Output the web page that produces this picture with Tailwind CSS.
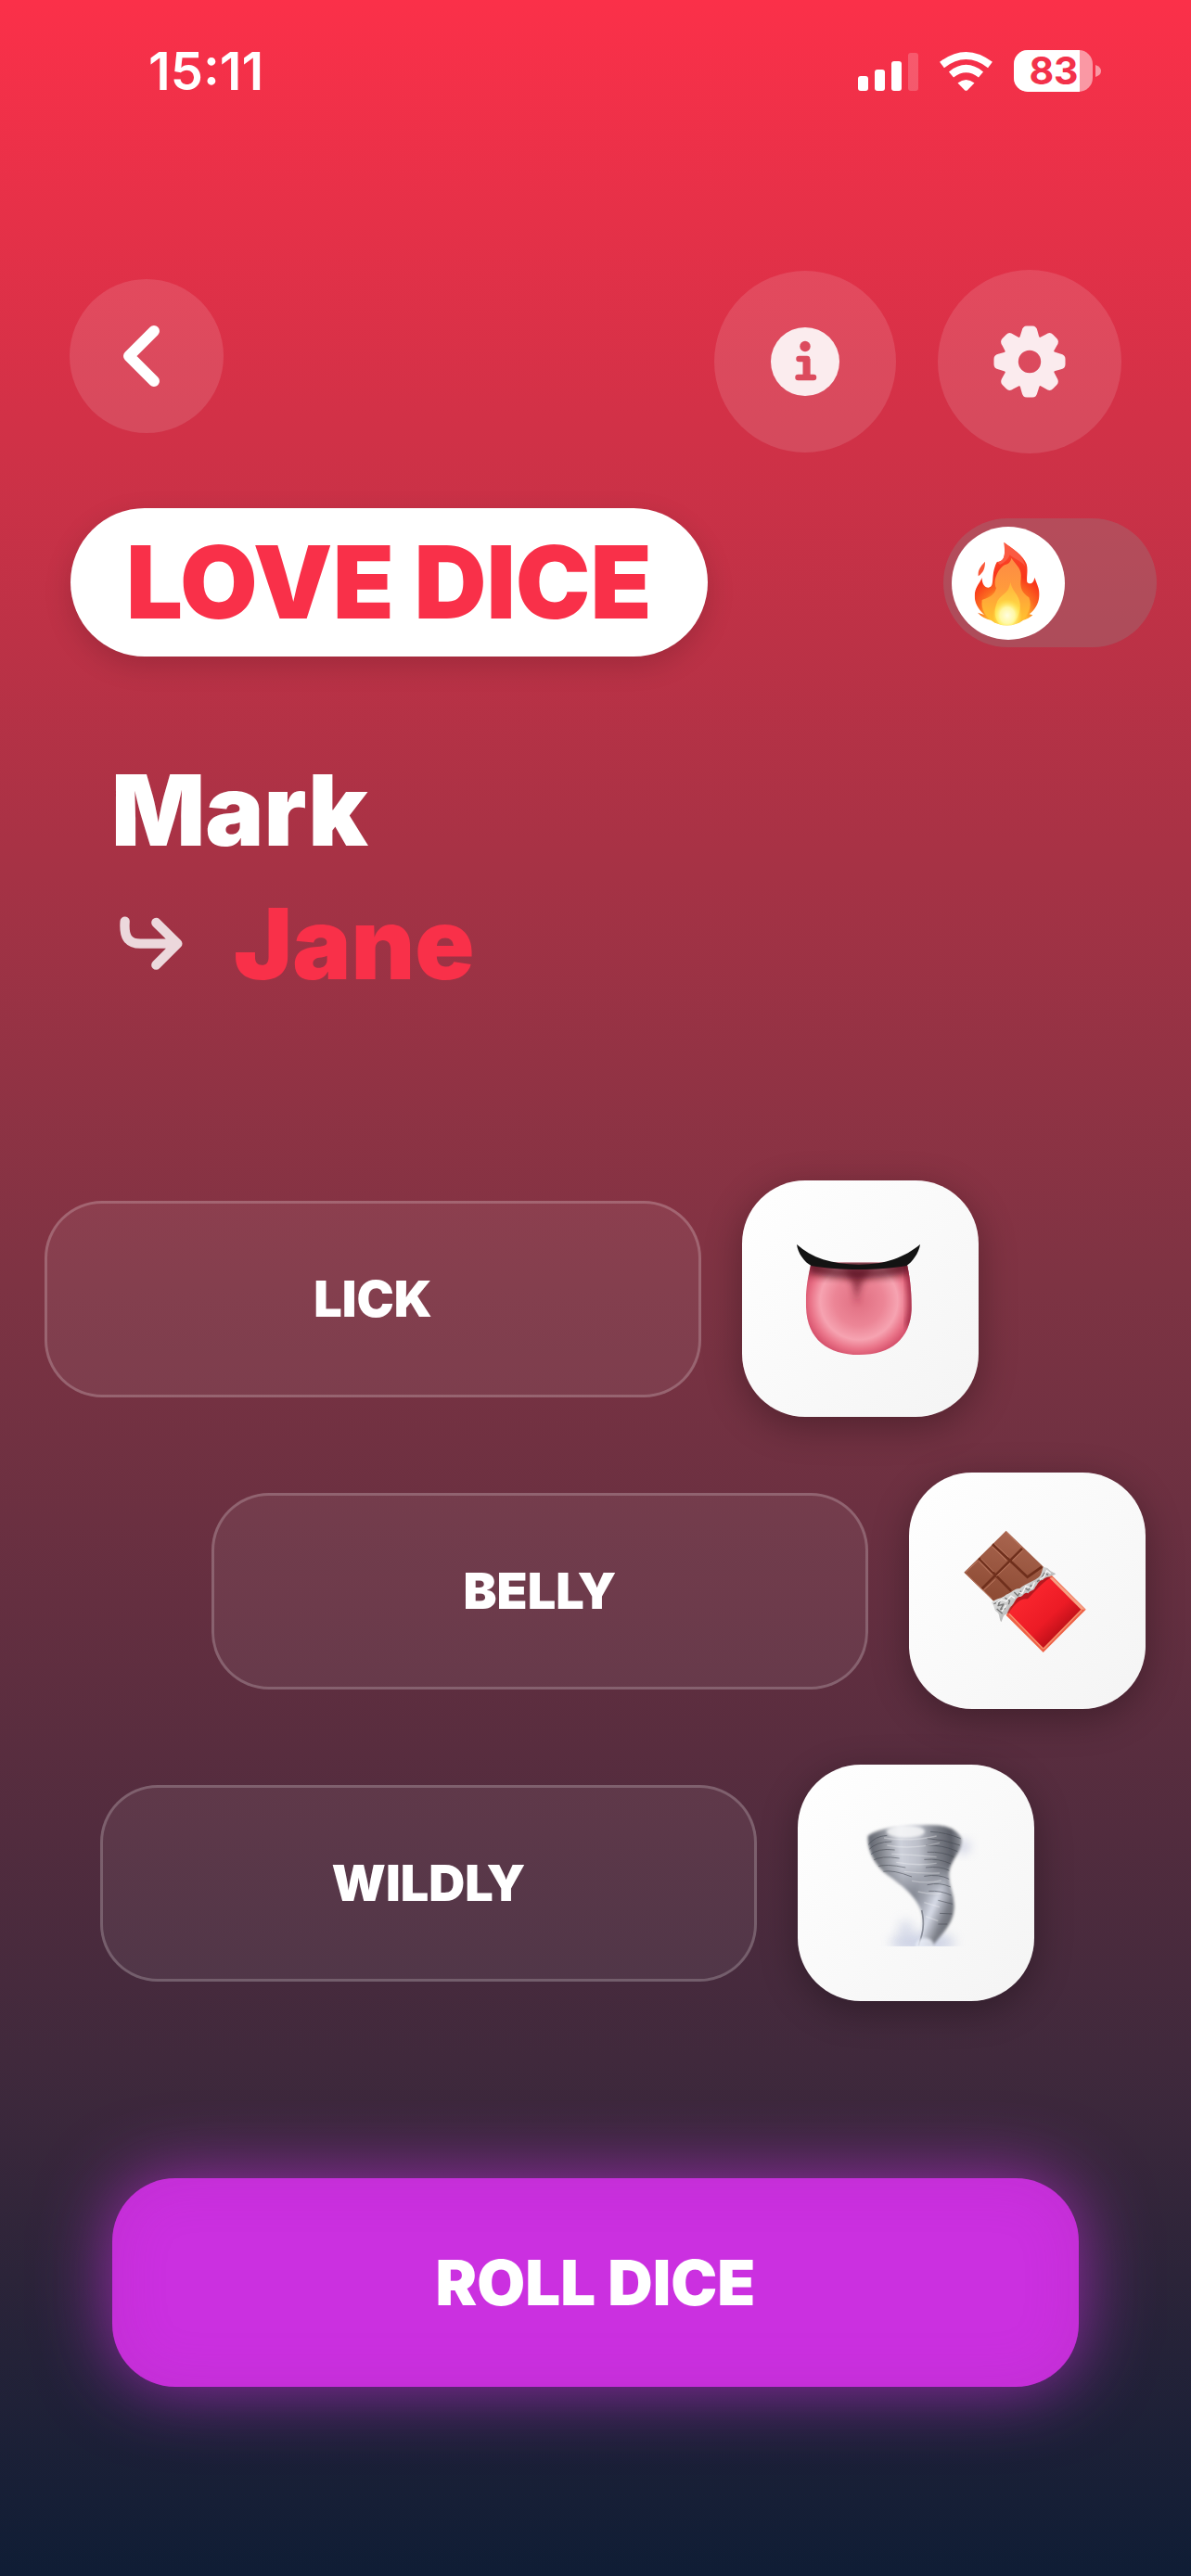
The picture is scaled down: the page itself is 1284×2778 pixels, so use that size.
<!DOCTYPE html>
<html lang="en">
<head>
<meta charset="utf-8">
<meta name="viewport" content="width=device-width, initial-scale=1">
<title>Love Dice</title>
<script src="https://cdn.jsdelivr.net/npm/@tailwindcss/browser@4"></script>
</head>
<body class="font-[Inter,sans-serif] text-white">
<div class="flex min-h-screen flex-col bg-linear-[180deg,#fb3049_0%,#7d3343_50%,#40293c_80%,#0f1d35_100%]">

  <!-- Status bar -->
  <div class="flex h-[154px] items-center justify-between pl-40 pr-[97px]">
    <time class="text-[56px] leading-none font-semibold">15:11</time>
    <svg class="h-[46px] w-[262px] overflow-visible" viewBox="0 0 262 46" aria-label="Signal, Wi-Fi, battery 83 percent">
      <g fill="#fff">
        <rect x="0" y="28" width="11" height="16" rx="3"/>
        <rect x="18" y="21" width="11" height="23" rx="3"/>
        <rect x="36" y="12" width="11" height="32" rx="3"/>
        <rect x="54" y="3" width="11" height="41" rx="3" opacity=".2"/>
      </g>
      <g fill="none" stroke="#fff" stroke-width="8">
        <path d="M90.500 16 Q116.500 -4 142.500 16"/>
        <path d="M100.500 26.500 Q116.500 13.500 132.500 26.500"/>
      </g>
      <path d="M107.500 35.500 Q116.500 28.500 125.500 35.500 L118 43.200 Q116.500 44.500 115 43.200 Z" fill="#fff"/>
      <clipPath id="cell"><rect x="168" y="0" width="85" height="45" rx="15"/></clipPath>
      <g clip-path="url(#cell)">
        <rect x="168" width="85" height="45" fill="#fff" opacity=".5"/>
        <rect x="168" width="71" height="45" fill="#fff"/>
      </g>
      <path d="M256 16 Q262 18 262 22.500 T256 29 Z" fill="#fff" opacity=".5"/>
      <text x="211" y="37" text-anchor="middle" font-size="41" font-weight="700" fill="#f3314a">83</text>
    </svg>
  </div>

  <!-- Navigation -->
  <header class="mt-[137px] flex items-start justify-between px-[75px]">
    <button type="button" aria-label="Back" class="mt-[10px] flex size-[166px] items-center justify-center rounded-full bg-white/12">
      <svg class="size-full" viewBox="0 0 166 166" fill="none" stroke="#fff" stroke-width="12" stroke-linecap="round" stroke-linejoin="round"><path d="M91 56 L64 83 L91 110"/></svg>
    </button>
    <div class="flex items-center gap-[45px]">
      <button type="button" aria-label="Information" class="size-[196px] rounded-full bg-white/12">
        <svg class="size-full" viewBox="-98 -98 196 196">
          <circle r="37" fill="#fbecee"/>
          <circle cy="-16.500" r="5.700" fill="#dc4b5d"/>
          <path d="M-6.500 -3 H2 V17 M-7.500 17 H9" fill="none" stroke="#dc4b5d" stroke-width="6.500" stroke-linecap="round" stroke-linejoin="round"/>
          <path d="M1.500 -3 V17" stroke="#dc4b5d" stroke-width="8"/>
        </svg>
      </button>
      <button type="button" aria-label="Settings" class="size-[198px] rounded-full bg-white/12">
        <svg class="size-full" viewBox="-99 -99 198 198">
          <defs><path id="tooth" d="M-12 -22 L-8.500 -33 Q-7.500 -38.500 -3 -38.500 H3 Q7.500 -38.500 8.500 -33 L10 -27.500 L12 -22 Z"/></defs>
          <g fill="#fbebee">
            <path fill-rule="evenodd" d="M0 -28.500 A28.500 28.500 0 1 1 0 28.500 A28.500 28.500 0 1 1 0 -28.500 Z M0 -12.200 A12.200 12.200 0 1 0 0 12.200 A12.200 12.200 0 1 0 0 -12.200 Z"/>
            <use href="#tooth"/><use href="#tooth" transform="rotate(45)"/><use href="#tooth" transform="rotate(90)"/><use href="#tooth" transform="rotate(135)"/><use href="#tooth" transform="rotate(180)"/><use href="#tooth" transform="rotate(225)"/><use href="#tooth" transform="rotate(270)"/><use href="#tooth" transform="rotate(315)"/>
          </g>
        </svg>
      </button>
    </div>
  </header>

  <!-- Title and spicy mode switch -->
  <div class="mt-[59px] flex items-center justify-between pl-[76px] pr-[37px]">
    <h1 class="rounded-[80px] bg-white px-[60px] text-[108px] leading-[160px] font-black text-[#f93049] shadow-[0_10px_30px_rgba(0,0,0,0.15)]">LOVE DICE</h1>
    <label class="relative block h-[139px] w-[230px]">
      <input type="checkbox" role="switch" aria-label="Spicy mode" class="block size-full appearance-none rounded-full bg-[#8c8c8c]/30">
      <span class="absolute top-[9px] left-[9px] size-[122px] rounded-full bg-white">
        <svg class="size-full" viewBox="138 111 366 366" aria-hidden="true">
          <defs>
            <radialGradient id="f1" gradientUnits="userSpaceOnUse" cx="318" cy="400" r="235"><stop offset="0" stop-color="#ffe04a"/><stop offset=".26" stop-color="#ffb52c"/><stop offset=".4" stop-color="#fb6a20"/><stop offset=".58" stop-color="#f9361a"/><stop offset="1" stop-color="#fb4a30"/></radialGradient>
            <linearGradient id="f2" x1="0" y1="0" x2="0" y2="1"><stop offset="0" stop-color="#fd8a45"/><stop offset=".45" stop-color="#ff9a3c"/><stop offset="1" stop-color="#ffc62e"/></linearGradient>
            <linearGradient id="f3" x1="0" y1="0" x2="0" y2="1"><stop offset="0" stop-color="#ffb13a"/><stop offset="1" stop-color="#fff04e"/></linearGradient>
            <radialGradient id="f4"><stop offset="0" stop-color="#fffde0"/><stop offset=".5" stop-color="#fffab0" stop-opacity=".9"/><stop offset="1" stop-color="#ffec4a" stop-opacity="0"/></radialGradient>
            <clipPath id="flame"><path d="M307 161 C335 182 370 203 380 232 C386 252 379 275 382 290 C390 300 404 294 406 275 C415 300 424 315 421 338 C418 362 408 378 389 394 L400 397 C384 410 378 411 369 414 C340 436 293 436 266 414 C248 410 234 402 222 389 L243 396 C219 373 209 348 213 325 C217 302 229 294 236 276 C236 296 244 308 257 308 C280 306 262 268 284 226 C295 220 316 228 307 161 Z"/></clipPath>
          </defs>
          <path d="M246 224 C246 247 240 259 224 271 C222 252 230 240 246 224 Z" fill="#f95638"/>
          <g clip-path="url(#flame)">
            <rect x="200" y="150" width="240" height="290" fill="url(#f1)"/>
            <path d="M307 161 C335 182 370 203 376 240 C364 222 340 216 326 202 C320 218 308 228 294 234 L284 226 C298 226 314 216 307 161 Z" fill="#fb5a42"/>
            <path d="M331 212 C348 238 366 246 362 280 C358 310 366 326 388 340 C400 370 386 400 352 424 H280 C248 404 232 380 236 348 C250 344 276 336 282 310 C268 282 294 236 318 232 C327 226 330 220 331 212 Z" fill="url(#f2)"/>
            <path d="M328 290 C334 320 348 322 357 350 C366 382 350 412 332 430 H298 C276 414 272 384 286 352 C300 326 322 330 328 290 Z" fill="url(#f3)"/>
            <ellipse cx="318" cy="398" rx="48" ry="52" fill="url(#f4)"/>
          </g>
        </svg>
      </span>
    </label>
  </div>

  <!-- Players -->
  <section class="mt-[94px] pl-[120px] text-[106px] leading-[144px] font-black">
    <p>Mark</p>
    <p class="flex items-center gap-[52px] text-[#f93049]">
      <svg class="size-20" viewBox="30 54 240 240" fill="none" stroke="#ecd8dc" stroke-width="31" stroke-linecap="round" stroke-linejoin="round" aria-hidden="true"><path d="M74 101 C70 150 84 173 124 173 H244 M175 105 L244 173 L175 242"/></svg>
      <span>Jane</span>
    </p>
  </section>

  <!-- Dice results -->
  <main class="mt-[183px] flex flex-col gap-[60px] text-[54px] leading-none font-black">
    <div class="flex items-center gap-11 pl-12">
      <div class="flex h-[212px] w-[708px] items-center justify-center rounded-[62px] border-3 border-white/20 bg-white/6">LICK</div>
      <div class="size-[255px] rounded-[68px] bg-linear-135 from-white to-[#f4f4f4] shadow-[0_10px_40px_rgba(0,0,0,0.3)]">
        <svg class="size-full" viewBox="60 70 765 765" role="img" aria-label="Tongue">
          <defs>
            <radialGradient id="t1" gradientUnits="userSpaceOnUse" cx="438" cy="460" r="190"><stop offset="0" stop-color="#e06f82"/><stop offset=".42" stop-color="#ec8596"/><stop offset=".66" stop-color="#f6a3b1"/><stop offset=".82" stop-color="#ea7489"/><stop offset="1" stop-color="#cf4562"/></radialGradient>
            <linearGradient id="t2" x1="0" y1="0" x2="0" y2="1"><stop offset="0" stop-color="#1d0408"/><stop offset=".25" stop-color="#5a1826" stop-opacity=".75"/><stop offset="1" stop-color="#c04058" stop-opacity="0"/></linearGradient>
            <clipPath id="tc"><path d="M284 335 C272 390 265 420 267 480 C270 585 340 634 438 634 C545 634 603 580 608 490 C609 430 603 380 592 335 Z"/></clipPath>
            <filter id="tb" x="-50%" y="-50%" width="200%" height="200%"><feGaussianBlur stdDeviation="11"/></filter>
          </defs>
          <g clip-path="url(#tc)">
            <rect x="250" y="320" width="380" height="330" fill="url(#t1)"/>
            <path d="M375 340 H500 Q440 385 430 470 Q425 390 375 340 Z" fill="#7c2236" opacity=".75" filter="url(#tb)"/>
            <path d="M592 335 C612 400 615 500 598 545" fill="none" stroke="#982840" stroke-width="22" filter="url(#tb)"/>
            <path d="M284 335 Q438 385 592 335 V370 Q438 405 278 370 Z" fill="#34060e" filter="url(#tb)" opacity=".65"/>
            <rect x="260" y="335" width="350" height="70" fill="url(#t2)" opacity=".5"/>
          </g>
          <path d="M237 277 C285 320 350 342 438 342 C526 342 586 318 636 277 C632 305 610 335 592 346 C545 354 490 358 438 358 C385 358 330 354 284 346 C262 335 240 305 237 277 Z" fill="#131313"/>
        </svg>
      </div>
    </div>

    <div class="flex items-center gap-11 pl-[228px]">
      <div class="flex h-[212px] w-[708px] items-center justify-center rounded-[62px] border-3 border-white/20 bg-white/6">BELLY</div>
      <div class="size-[255px] rounded-[68px] bg-linear-135 from-white to-[#f4f4f4] shadow-[0_10px_40px_rgba(0,0,0,0.3)]">
        <svg class="size-full" viewBox="62 57 765 765" role="img" aria-label="Chocolate bar">
          <defs>
            <linearGradient id="c1" gradientUnits="userSpaceOnUse" x1="376" y1="245" x2="330" y2="470"><stop offset="0" stop-color="#a9654f"/><stop offset="1" stop-color="#8c4a33"/></linearGradient>
            <linearGradient id="c2" gradientUnits="userSpaceOnUse" x1="430" y1="440" x2="580" y2="600"><stop offset="0" stop-color="#fb272f"/><stop offset=".55" stop-color="#ec1b25"/><stop offset=".85" stop-color="#bd0f18"/><stop offset="1" stop-color="#d0131c"/></linearGradient>
            <linearGradient id="c3" x1="0" y1="0" x2="1" y2="1"><stop offset="0" stop-color="#8d8d8d"/><stop offset=".3" stop-color="#e2e2e2"/><stop offset=".6" stop-color="#b5b5b5"/><stop offset="1" stop-color="#8a8a8a"/></linearGradient>
          </defs>
          <path d="M376 245 L500 365 L460 440 L340 478 L240 380 Z" fill="url(#c1)"/>
          <g fill="none" stroke="#6f2f1c" stroke-width="8">
            <path d="M332 289 L445 395 L492 362 M288 334 L392 440 M428 303 L297 434"/>
          </g>
          <g fill="none" stroke="#bd7a62" stroke-width="3">
            <path d="M376 249 L426 299 M339 288 L384 331 M332 297 L377 341 M294 335 L336 378 M287 343 L330 387 M389 350 L345 392 M430 309 L396 342 M245 380 L284 343 M342 402 L304 437 M247 385 L330 465"/>
          </g>
          <path d="M520 386 L634 500 L496 639 L376 519 L420 440 Z" fill="#ee6146"/>
          <path d="M526 396 L632 500 L618 500 L515 399 Z" fill="#f6a184"/>
          <path d="M512 394 L618 500 L496 624 L384 512 L420 445 Z" fill="url(#c2)"/>
          <path d="M386 514 L496 628 M620 502 L498 627" stroke="#f8906e" stroke-width="4"/>
          <path d="M384 512 C405 478 425 462 446 466 C472 440 490 415 520 397 L500 390 L400 450 L370 510 Z" fill="#8e1015" opacity=".6"/>
          <path d="M328 478 C345 462 362 466 376 452 C392 448 402 432 420 432 C440 415 468 410 488 390 L496 362 L510 366 L520 376 L537 385 C525 394 505 393 494 405 C482 404 478 420 470 428 C465 442 455 435 448 448 C434 440 432 460 418 459 C405 464 405 478 394 488 C384 492 384 508 376 516 C366 516 366 530 360 541 C352 528 357 516 346 508 C336 503 340 488 328 478 Z" fill="url(#c3)"/>
          <g fill="none" stroke-linejoin="round" stroke-width="4">
            <path stroke="#777" d="M336 482 L356 474 L350 488 L368 483 L358 500 L374 497 M372 462 L388 472 L384 484 M402 444 L414 456 L424 440 M436 430 L448 438 L458 420 M476 410 L490 400 L500 382 L512 388 M346 498 L364 514"/>
            <path stroke="#f7f7f7" d="M345 480 L362 468 L376 474 L392 456 L404 464 M418 444 L428 448 L440 424 L460 432 L468 412 M484 404 L498 394 L508 374 L520 384 M362 506 L376 486"/>
          </g>
        </svg>
      </div>
    </div>

    <div class="flex items-center gap-11 pl-[108px]">
      <div class="flex h-[212px] w-[708px] items-center justify-center rounded-[62px] border-3 border-white/20 bg-white/6">WILDLY</div>
      <div class="size-[255px] rounded-[68px] bg-linear-135 from-white to-[#f4f4f4] shadow-[0_10px_40px_rgba(0,0,0,0.3)]">
        <svg class="size-full" viewBox="61 69 765 765" role="img" aria-label="Tornado">
          <defs>
            <linearGradient id="w1" gradientUnits="userSpaceOnUse" x1="290" y1="370" x2="590" y2="350"><stop offset="0" stop-color="#5f636d"/><stop offset=".12" stop-color="#7b7e86"/><stop offset=".35" stop-color="#ced1db"/><stop offset=".55" stop-color="#bbbec8"/><stop offset=".72" stop-color="#82858e"/><stop offset=".9" stop-color="#5b5e67"/><stop offset="1" stop-color="#8c8f97"/></linearGradient>
            <linearGradient id="w2" gradientUnits="userSpaceOnUse" x1="430" y1="500" x2="568" y2="560"><stop offset="0" stop-color="#7e828d"/><stop offset=".25" stop-color="#a1a5b0"/><stop offset=".5" stop-color="#d8dce8"/><stop offset=".8" stop-color="#7c7f88"/><stop offset="1" stop-color="#6c6f77"/></linearGradient>
            <linearGradient id="w3" x1="0" y1="0" x2="0" y2="1"><stop offset=".35" stop-color="#fff" stop-opacity="0"/><stop offset=".6" stop-color="#fff"/></linearGradient>
            <mask id="wm"><rect x="200" y="240" width="450" height="430" fill="url(#w3)"/></mask>
            <filter id="wb" x="-20%" y="-20%" width="140%" height="140%"><feGaussianBlur stdDeviation="4"/></filter>
            <filter id="wl" x="-20%" y="-20%" width="140%" height="140%"><feGaussianBlur stdDeviation="2"/></filter>
            <filter id="wg" x="-60%" y="-60%" width="220%" height="220%"><feGaussianBlur stdDeviation="18"/></filter>
            <path id="funnel" d="M288 300 C325 272 400 266 470 264 C535 262 570 272 590 305 C600 345 558 370 551 415 C546 460 572 490 565 545 C558 590 520 625 495 657 H450 C460 625 470 580 462 550 C450 500 400 460 350 425 C310 395 285 345 288 300 Z"/>
            <clipPath id="wc"><use href="#funnel"/></clipPath>
            <clipPath id="wbase"><rect x="240" y="230" width="420" height="427"/></clipPath>
          </defs>
          <g clip-path="url(#wbase)">
            <ellipse cx="465" cy="645" rx="105" ry="32" fill="#b9c1dc" opacity=".65" filter="url(#wg)"/>
            <ellipse cx="410" cy="600" rx="22" ry="28" fill="#b9c1dc" opacity=".5" filter="url(#wg)"/>
            <ellipse cx="595" cy="335" rx="22" ry="20" fill="#a9aed0" opacity=".6" filter="url(#wg)"/>
            <g filter="url(#wb)">
              <use href="#funnel" fill="url(#w1)"/>
              <use href="#funnel" fill="url(#w2)" mask="url(#wm)"/>
            </g>
            <g clip-path="url(#wc)" fill="none" filter="url(#wl)">
              <g stroke="#3c4049" stroke-width="3" opacity=".5">
                <path d="M288 330 Q310 300 350 298 M290 345 Q315 318 365 318 M294 362 Q320 338 375 345 M302 380 Q330 362 390 372 M315 400 Q345 388 410 402 M335 415 Q370 408 430 432"/>
                <path d="M490 286 Q540 288 588 308 M480 308 Q530 310 586 330 M475 330 Q530 328 578 350 M480 352 Q530 350 566 368 M470 376 Q520 372 556 390 M475 402 Q520 396 552 412 M470 430 Q520 422 552 440 M480 458 Q520 448 556 465 M485 478 Q525 476 558 492 M515 508 L562 520 M520 550 L560 552 M515 585 L545 585"/>
              </g>
              <g stroke="#fff" stroke-width="4" opacity=".3">
                <path d="M340 306 Q420 320 510 300 M350 330 Q430 345 520 322 M365 358 Q440 360 510 368 M380 385 Q450 398 510 388 M405 415 Q460 422 520 420 M430 445 Q480 455 525 444 M450 480 Q490 490 525 486 M470 515 L520 530 M475 560 L515 575"/>
              </g>
            </g>
            <ellipse cx="410" cy="286" rx="62" ry="20" fill="#fff" opacity=".75" filter="url(#wb)"/>
            <path d="M462 540 C474 590 463 620 452 655" fill="none" stroke="#5a5e6a" stroke-width="5" opacity=".6" filter="url(#wl)"/>
            <ellipse cx="472" cy="655" rx="30" ry="26" fill="#edf1fb" opacity=".8" filter="url(#wb)"/>
          </g>
        </svg>
      </div>
    </div>
  </main>

  <footer class="mt-[191px] px-[121px] pb-[200px]">
    <button type="button" class="block h-[225px] w-full rounded-[68px] bg-[#cb30e0] text-[67px] leading-none font-black shadow-[0_0_80px_rgba(203,48,224,0.7),inset_0_0_60px_rgba(150,40,150,0.2)]">ROLL DICE</button>
  </footer>
</div>
</body>
</html>
